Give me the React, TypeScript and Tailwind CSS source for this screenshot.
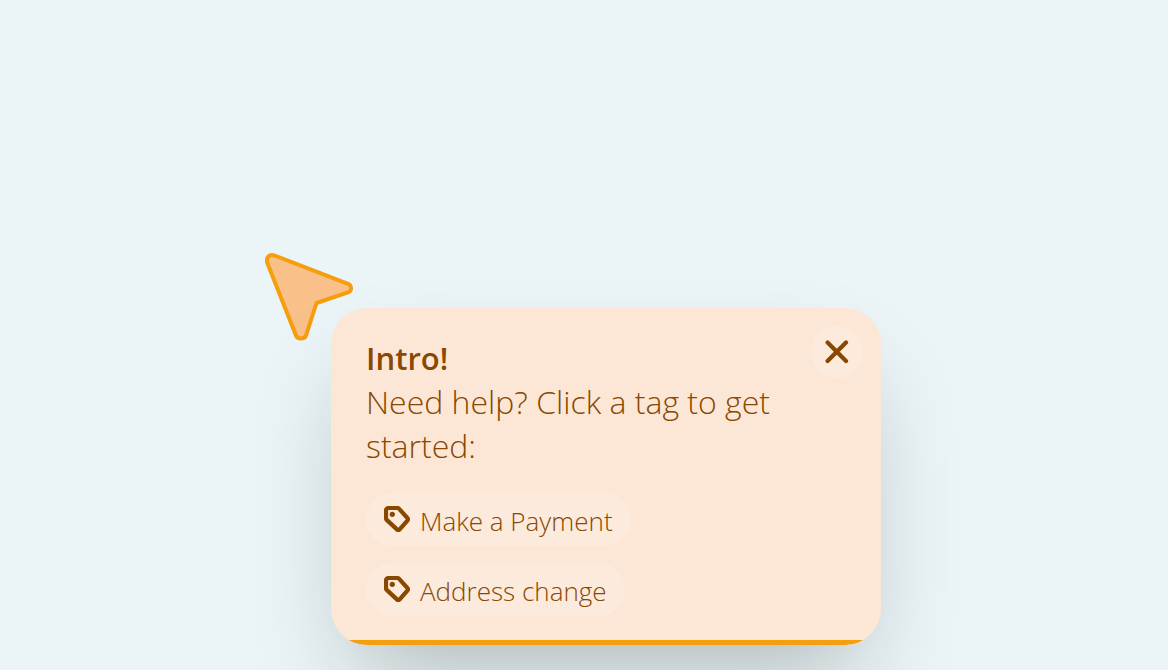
import React from 'react';

interface TagButtonProps {
  label: string;
}

const TagIcon = () => (
  <svg className="size-[26px] shrink-0 -mt-[2px]" viewBox="0 0 26 26" fill="none" aria-hidden="true">
    <path
      d="M2 4.5A2.5 2.5 0 0 1 4.5 2H13.4A2 2 0 0 1 14.9 2.6L23.4 12A2 2 0 0 1 23.4 14.6L15.7 23.3A2 2 0 0 1 12.9 23.4L2.7 13.9A2 2 0 0 1 2 12.4Z"
      stroke="currentColor"
      strokeWidth="4.2"
      strokeLinejoin="round"
    />
    <circle cx="8.3" cy="8.3" r="2.6" fill="currentColor" />
  </svg>
);

const PointerIcon = () => (
  <svg className="block size-[88px]" viewBox="0 0 88 88" aria-hidden="true">
    <path
      d="M9.5 2.5L83 30.8C87 32.5 87 38 83 39.3L51.5 50L41 82.5C39.5 86.5 32.5 86.5 31 82.5L2.5 10.5C.5 4.5 4 .8 9.5 2.5Z"
      fill="#f9c08a"
      stroke="#f59e0e"
      strokeWidth="4"
      strokeLinejoin="round"
    />
  </svg>
);

const TagButton = ({ label }: TagButtonProps) => (
  <button
    type="button"
    className="flex h-[53px] items-center gap-[10px] rounded-full bg-[#fceadc] px-[18px] text-[26px] leading-[40px] font-light"
  >
    <TagIcon />
    <span className="mt-[2px]">{label}</span>
  </button>
);

const IntroCard = () => (
  <section className="relative w-full max-w-[550px] overflow-hidden rounded-[36px] bg-[#fce7d6] text-[#8a4700] shadow-[0_50px_100px_-24px_rgba(0,0,0,0.25)]">
    <div className="px-[35px] pt-[28px] pb-6">
      <h1 className="text-[31px] leading-[44px] font-semibold">Intro!</h1>
      <p className="text-[32px] leading-[44px] font-light">Need help? Click a tag to get started:</p>
      <div className="mt-[25px] flex flex-col items-start gap-[17px]">
        <TagButton label="Make a Payment" />
        <TagButton label="Address change" />
      </div>
    </div>
    <button
      type="button"
      aria-label="Close"
      className="absolute top-[18px] right-[18px] flex size-[52px] items-center justify-center rounded-full bg-[#fceadc]"
    >
      <svg className="size-6" viewBox="0 0 24 24" fill="none" aria-hidden="true">
        <path d="M2.6 2.6L21 21M21 2.6L2.6 21" stroke="currentColor" strokeWidth="4.2" strokeLinecap="round" />
      </svg>
    </button>
    <div className="h-[5px] bg-[#f59e0e]" />
  </section>
);

export default function App() {
  return (
    <main className="min-h-screen bg-[#ebf5f7] pt-[253px] pl-[265px] font-['Open_Sans','Noto_Sans',sans-serif]">
      <PointerIcon />
      <div className="-mt-[33px] pl-[66px]">
        <IntroCard />
      </div>
    </main>
  );
}
